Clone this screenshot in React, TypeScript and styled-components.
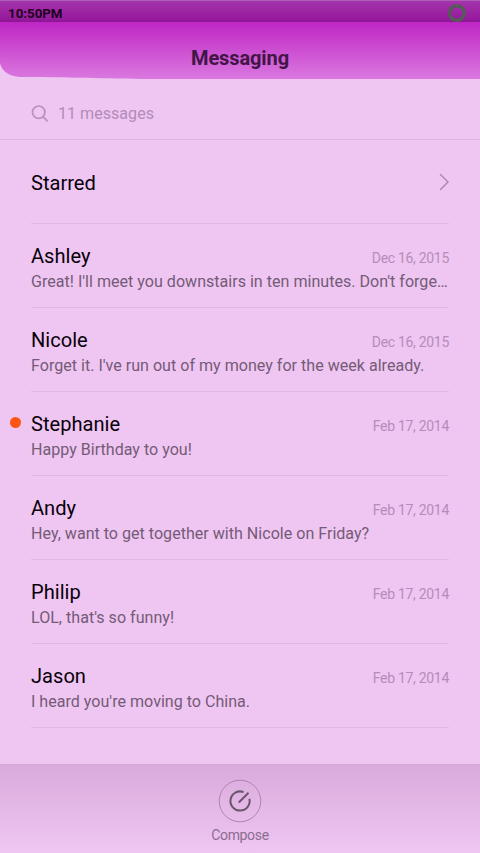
import React from "react";
import styled, { createGlobalStyle } from "styled-components";

const Global = createGlobalStyle`
  * { box-sizing: border-box; }
  body { margin: 0; background: #efc6f2; font-family: Roboto, "Liberation Sans", sans-serif; }
`;

const Screen = styled.div`
  width: 480px;
  height: 853px;
  display: flex;
  flex-direction: column;
  overflow: hidden;
  background: #efc6f2;
`;

const StatusBar = styled.div`
  height: 22px;
  flex: none;
  display: flex;
  justify-content: space-between;
  align-items: flex-start;
  padding: 4px 13px 0 8px;
  border-top: 1px solid #b05fb8;
  background: linear-gradient(#a435ab, #961a9d 85%, #8c1593);
`;

const Clock = styled.span`
  font-size: 13.3px;
  line-height: 18px;
  font-weight: 700;
  color: #1d0320;
`;

const Battery = styled.svg`
  width: 20px;
  height: 20px;
  margin: -2px 0 0;
  overflow: visible;
  position: relative;
  z-index: 2;
`;

const Header = styled.header`
  height: 57px;
  flex: none;
  display: grid;
`;

const HeaderShape = styled.svg`
  grid-area: 1 / 1;
  width: 480px;
  height: 57px;
`;

const Title = styled.h1`
  grid-area: 1 / 1;
  margin: 0;
  padding-top: 24px;
  text-align: center;
  font-size: 20px;
  letter-spacing: -0.1px;
  line-height: 24px;
  font-weight: 700;
  color: #421547;
  z-index: 1;
`;

const Search = styled.div`
  height: 61px;
  flex: none;
  display: flex;
  align-items: center;
  padding: 9px 31px 0;
  border-bottom: 1px solid #ddb6e1;
  color: #b28cb7;
  font-size: 16.1px;
  gap: 9px;
`;

const List = styled.main`
  flex: 1;
  padding: 0 31px;
`;

const Row = styled.div`
  height: 84px;
  display: flex;
  flex-direction: column;
  padding-top: 19px;
  border-bottom: 1px solid #e0b8e4;
  position: relative;
`;

const StarredRow = styled(Row)`
  flex-direction: row;
  justify-content: space-between;
  align-items: center;
  padding-top: 2px;
`;

const Line = styled.div`
  display: flex;
  justify-content: space-between;
  align-items: flex-start;
`;

const Name = styled.span`
  font-size: 20.1px;
  line-height: 26px;
  color: #08010a;
`;

const When = styled.span`
  padding-top: 6px;
  font-size: 14px;
  line-height: 18px;
  letter-spacing: -0.3px;
  color: #b48db9;
`;

const Preview = styled.div`
  font-size: 16.08px;
  line-height: 20px;
  margin-top: 3px;
  color: #745b77;
  white-space: nowrap;
`;

const Unread = styled.i`
  position: absolute;
  left: -21px;
  top: 25px;
  width: 11px;
  height: 11px;
  border-radius: 50%;
  background: #ff5512;
`;

const Toolbar = styled.footer`
  height: 89px;
  flex: none;
  display: flex;
  flex-direction: column;
  align-items: center;
  padding-top: 14px;
  border-top: 1px solid #d5a9d8;
  background: linear-gradient(#d9aadc, #efc6f2);
`;

const Label = styled.span`
  margin-top: 4px;
  font-size: 14px;
  letter-spacing: -0.35px;
  line-height: 17px;
  color: #8c6c91;
`;

const messages = [
  { name: "Ashley", when: "Dec 16, 2015", text: "Great! I'll meet you downstairs in ten minutes. Don't forge…" },
  { name: "Nicole", when: "Dec 16, 2015", text: "Forget it. I've run out of my money for the week already." },
  { name: "Stephanie", when: "Feb 17, 2014", text: "Happy Birthday to you!", unread: true },
  { name: "Andy", when: "Feb 17, 2014", text: "Hey, want to get together with Nicole on Friday?" },
  { name: "Philip", when: "Feb 17, 2014", text: "LOL, that's so funny!" },
  { name: "Jason", when: "Feb 17, 2014", text: "I heard you're moving to China." },
];

export default function App() {
  return (
    <Screen>
      <Global />
      <StatusBar>
        <Clock>10:50PM</Clock>
        <Battery viewBox="0 0 20 20" fill="none">
          <circle cx="9.8" cy="10" r="7.4" stroke="#545c56" strokeWidth="3.4" />
          <path d="M9.8 1.4v2" stroke="#79617e" strokeWidth="1" />
        </Battery>
      </StatusBar>
      <Header>
        <HeaderShape viewBox="0 0 480 57">
          <defs>
            <linearGradient id="head" x1="0" y1="0" x2="0" y2="1">
              <stop offset="0" stopColor="#bf26c4" />
              <stop offset="1" stopColor="#da78df" />
            </linearGradient>
          </defs>
          <path d="M0 0H480V57H160C110 57 80 55.3 20 55C9 54 2 50 0 41Z" fill="url(#head)" />
        </HeaderShape>
        <Title>Messaging</Title>
      </Header>
      <Search>
        <svg width="18" height="18" viewBox="0 0 18 18" fill="none" stroke="#b891bd" strokeWidth="1.7">
          <circle cx="7.7" cy="7.2" r="6.2" />
          <path d="M12 11.6l4.6 4.7" />
        </svg>
        <span>11 messages</span>
      </Search>
      <List>
        <StarredRow>
          <Name>Starred</Name>
          <svg width="10" height="18" viewBox="0 0 10 18" fill="none" stroke="#aa80af" strokeWidth="1.3">
            <path d="M1 0l8 8-8 8" />
          </svg>
        </StarredRow>
        {messages.map((m) => (
          <Row key={m.name}>
            {m.unread && <Unread />}
            <Line>
              <Name>{m.name}</Name>
              <When>{m.when}</When>
            </Line>
            <Preview>{m.text}</Preview>
          </Row>
        ))}
      </List>
      <Toolbar>
        <svg width="44" height="44" viewBox="0 0 44 44" fill="none">
          <circle cx="22" cy="22" r="20.8" stroke="#b183b6" strokeWidth="1" />
          <path d="M25.6 13.1A9.6 9.6 0 1 0 31.4 19.8" stroke="#68576c" strokeWidth="2" />
          <path d="M20.8 23.5L30.5 13.8" stroke="#68576c" strokeWidth="2" />
        </svg>
        <Label>Compose</Label>
      </Toolbar>
    </Screen>
  );
}
